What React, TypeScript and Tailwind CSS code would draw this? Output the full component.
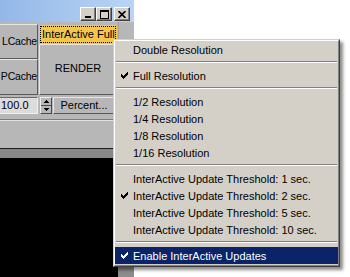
import React from 'react';

type Item =
  | { kind: 'item'; label: string; checked?: boolean; active?: boolean }
  | { kind: 'sep' };

const menuItems: Item[] = [
  { kind: 'item', label: 'Double Resolution' },
  { kind: 'sep' },
  { kind: 'item', label: 'Full Resolution', checked: true },
  { kind: 'sep' },
  { kind: 'item', label: '1/2 Resolution' },
  { kind: 'item', label: '1/4 Resolution' },
  { kind: 'item', label: '1/8 Resolution' },
  { kind: 'item', label: '1/16 Resolution' },
  { kind: 'sep' },
  { kind: 'item', label: 'InterActive Update Threshold: 1 sec.' },
  { kind: 'item', label: 'InterActive Update Threshold: 2 sec.', checked: true },
  { kind: 'item', label: 'InterActive Update Threshold: 5 sec.' },
  { kind: 'item', label: 'InterActive Update Threshold: 10 sec.' },
  { kind: 'sep' },
  { kind: 'item', label: 'Enable InterActive Updates', checked: true, active: true },
];

// classic 7x7 check mark, drawn pixel by pixel
const checkPixels = [
  [6, 0], [5, 1], [6, 1], [0, 2], [4, 2], [5, 2], [6, 2],
  [0, 3], [1, 3], [3, 3], [4, 3], [5, 3],
  [0, 4], [1, 4], [2, 4], [3, 4], [4, 4],
  [1, 5], [2, 5], [3, 5], [2, 6],
];

const Check = ({ color }: { color: string }) => (
  <svg width="7" height="7" viewBox="0 0 7 7" shapeRendering="crispEdges" fill={color}>
    {checkPixels.map(([x, y]) => (
      <rect key={`${x}-${y}`} x={x} y={y} width="1" height="1" />
    ))}
  </svg>
);

const CaptionButton = ({ children }: { children: React.ReactNode }) => (
  <div className="flex h-[14px] w-[16px] items-center justify-center border border-t-white border-l-white border-r-[#404040] border-b-[#404040] bg-[#d4d0c8] shadow-[inset_-1px_-1px_0_#808080]">
    {children}
  </div>
);

const bevel =
  'border border-t-[#e6e6e6] border-l-[#e6e6e6] border-r-[#5a5a5a] border-b-[#5a5a5a]';

const App = () => {
  return (
    <div className="relative h-[277px] w-[350px] overflow-hidden bg-white font-['Liberation_Sans',Arial,sans-serif] text-[11px] text-black">
      {/* window */}
      <div className="flex h-full w-[134px] flex-col">
        {/* title bar */}
        <div className="flex h-[22px] shrink-0 items-start justify-end bg-gradient-to-r from-[#93b8e8] to-[#b9d4f4] pr-[4px] pt-[7px]">
          <CaptionButton>
            <svg width="8" height="8" viewBox="0 0 8 8" shapeRendering="crispEdges">
              <rect x="1" y="6" width="6" height="2" fill="#000" />
            </svg>
          </CaptionButton>
          <CaptionButton>
            <svg width="9" height="9" viewBox="0 0 9 9" shapeRendering="crispEdges" fill="none" stroke="#000">
              <rect x="0.5" y="0.5" width="8" height="8" />
              <line x1="0" y1="1.5" x2="9" y2="1.5" />
            </svg>
          </CaptionButton>
          <div className="w-[2px]" />
          <CaptionButton>
            <svg width="8" height="7" viewBox="0 0 8 7" fill="none" stroke="#000" strokeWidth="1.6">
              <line x1="0.5" y1="0" x2="7.5" y2="7" />
              <line x1="7.5" y1="0" x2="0.5" y2="7" />
            </svg>
          </CaptionButton>
        </div>

        {/* command panel */}
        <div className="flex h-[126px] shrink-0 bg-[#b7b7b7]">
          <div className="flex w-[118px] flex-col">
            <div className="mt-[2px] flex h-[71px] gap-[1px]">
              <div className="flex w-[38px] flex-col">
                <div className={`flex h-[35px] items-center justify-end whitespace-nowrap text-[10.5px] tracking-[-0.2px] ${bevel} border-l-0`}>
                  LCache
                </div>
                <div className={`flex h-[36px] items-center justify-end whitespace-nowrap text-[10.5px] tracking-[-0.2px] ${bevel} border-l-0`}>
                  PCache
                </div>
              </div>
              <div className="flex w-[78px] flex-col">
                <div className="mt-[1px] h-[19px] bg-[#f3c74e] p-[1px]">
                  <div className="flex h-full items-center overflow-hidden whitespace-nowrap border border-dotted border-black pl-[1px]">
                    InterActive Full
                  </div>
                </div>
                <div className={`flex h-[51px] items-center justify-center ${bevel} pb-[2px]`}>
                  RENDER
                </div>
              </div>
            </div>

            <div className="mt-[2px] flex h-[17px] items-stretch">
              <div className="flex w-[38px] items-center border border-t-[#6a6a6a] border-l-0 border-r-[#f0f0f0] border-b-[#f0f0f0] bg-[#dcdcdc] pl-[1px]">
                100.0
              </div>
              <div className="ml-[2px] flex w-[12px] flex-col border border-t-[#eeeeee] border-l-[#eeeeee] border-r-[#4a4a4a] border-b-[#4a4a4a]">
                <div className="flex flex-1 items-center justify-center border-b border-b-[#4a4a4a]">
                  <svg width="5" height="3" viewBox="0 0 5 3" shapeRendering="crispEdges">
                    <path d="M2 0h1v1h1v1h1v1h-5v-1h1v-1h1z" fill="#000" />
                  </svg>
                </div>
                <div className="flex flex-1 items-center justify-center">
                  <svg width="5" height="3" viewBox="0 0 5 3" shapeRendering="crispEdges">
                    <path d="M0 0h5v1h-1v1h-1v1h-1v-1h-1v-1h-1z" fill="#000" />
                  </svg>
                </div>
              </div>
              <div className={`ml-[1px] flex w-[62px] items-center justify-center ${bevel}`}>
                Percent...
              </div>
            </div>

            <div className="mt-[5px] h-[2px] border-t border-t-[#7c7c7c] border-b border-b-[#e2e2e2]" />
          </div>
          <div className="flex-1 border-l border-l-[#a0a0a0]" />
        </div>

        {/* viewport edge */}
        <div className="h-[1px] shrink-0 bg-[#1c1c1c]" />
        <div className="h-[9px] shrink-0 bg-[#878787]" />
        <div className="flex flex-1">
          <div className="w-[118px] bg-black" />
          <div className="flex-1 bg-[#8c8c8c]" />
        </div>
      </div>

      {/* popup menu */}
      <div className="absolute left-[113px] top-[39px] w-[227px] border border-t-[#d4d0c8] border-l-[#d4d0c8] border-r-[#404040] border-b-[#404040] bg-[#d4d0c8] shadow-[3px_3px_3px_rgba(0,0,0,0.45)]">
        <div className="border border-t-white border-l-white border-r-[#808080] border-b-[#808080] pb-[1px]">
          {menuItems.map((item, i) =>
            item.kind === 'sep' ? (
              <div key={i} className="h-[9px] px-[1px] pt-[3px]">
                <div className="h-[2px] border-t border-t-[#808080] border-b border-b-white" />
              </div>
            ) : (
              <div
                key={i}
                className={`flex h-[17px] items-center whitespace-nowrap ${
                  item.active ? 'bg-[#0a246a] text-white' : 'text-black'
                }`}
              >
                <div className="flex w-[18px] shrink-0 items-center pl-[6px]">
                  {item.checked && <Check color={item.active ? '#ffffff' : '#000000'} />}
                </div>
                <span className="pt-[1px]">{item.label}</span>
              </div>
            )
          )}
        </div>
      </div>
    </div>
  );
};

export default App;
